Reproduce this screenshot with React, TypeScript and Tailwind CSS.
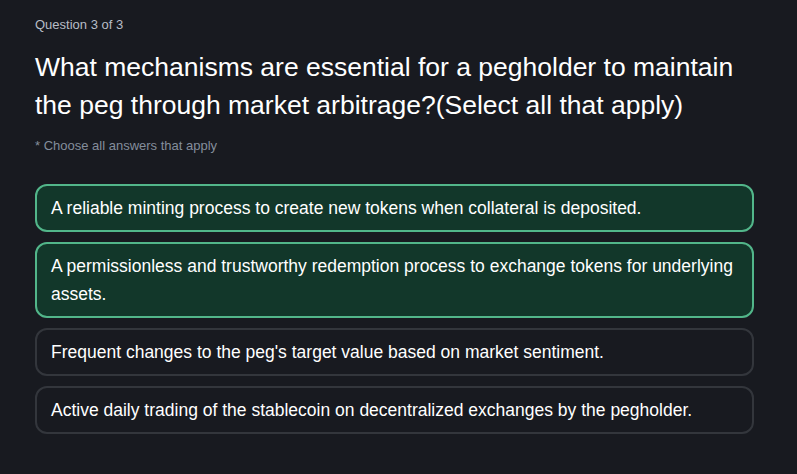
const options = [
  { text: 'A reliable minting process to create new tokens when collateral is deposited.', selected: true },
  {
    text: 'A permissionless and trustworthy redemption process to exchange tokens for underlying assets.',
    selected: true,
  },
  { text: "Frequent changes to the peg's target value based on market sentiment.", selected: false },
  { text: 'Active daily trading of the stablecoin on decentralized exchanges by the pegholder.', selected: false },
];

export default function App() {
  return (
    <div
      className="min-h-screen w-full bg-[#181a20] text-white"
      style={{ fontFamily: '"Liberation Sans", Arial, sans-serif' }}
    >
      <div className="w-[762px] pl-[35px] pt-[17px]">
        <div className="text-[13px] leading-4 text-[#b7bdc6]">Question 3 of 3</div>

        {/* Question */}
        <h1 className="mt-[15px] text-[26.5px] font-normal leading-[38px] text-white">
          What mechanisms are essential for a pegholder to maintain the peg through market arbitrage?(Select all that
          apply)
        </h1>
        <p className="mt-[14px] text-[13px] leading-4 text-[#848e9c]">* Choose all answers that apply</p>

        {/* Answers */}
        <div className="mt-[30px] flex w-[719px] flex-col gap-[10px]">
          {options.map((opt) => (
            <div
              key={opt.text}
              className={`rounded-xl border-2 px-[14px] py-[8px] text-[17.5px] leading-7 ${
                opt.selected ? 'border-[#52b68a] bg-[#12372a]' : 'border-[#33363c] bg-[#181a20]'
              }`}
            >
              {opt.text}
            </div>
          ))}
        </div>
      </div>
    </div>
  );
}
